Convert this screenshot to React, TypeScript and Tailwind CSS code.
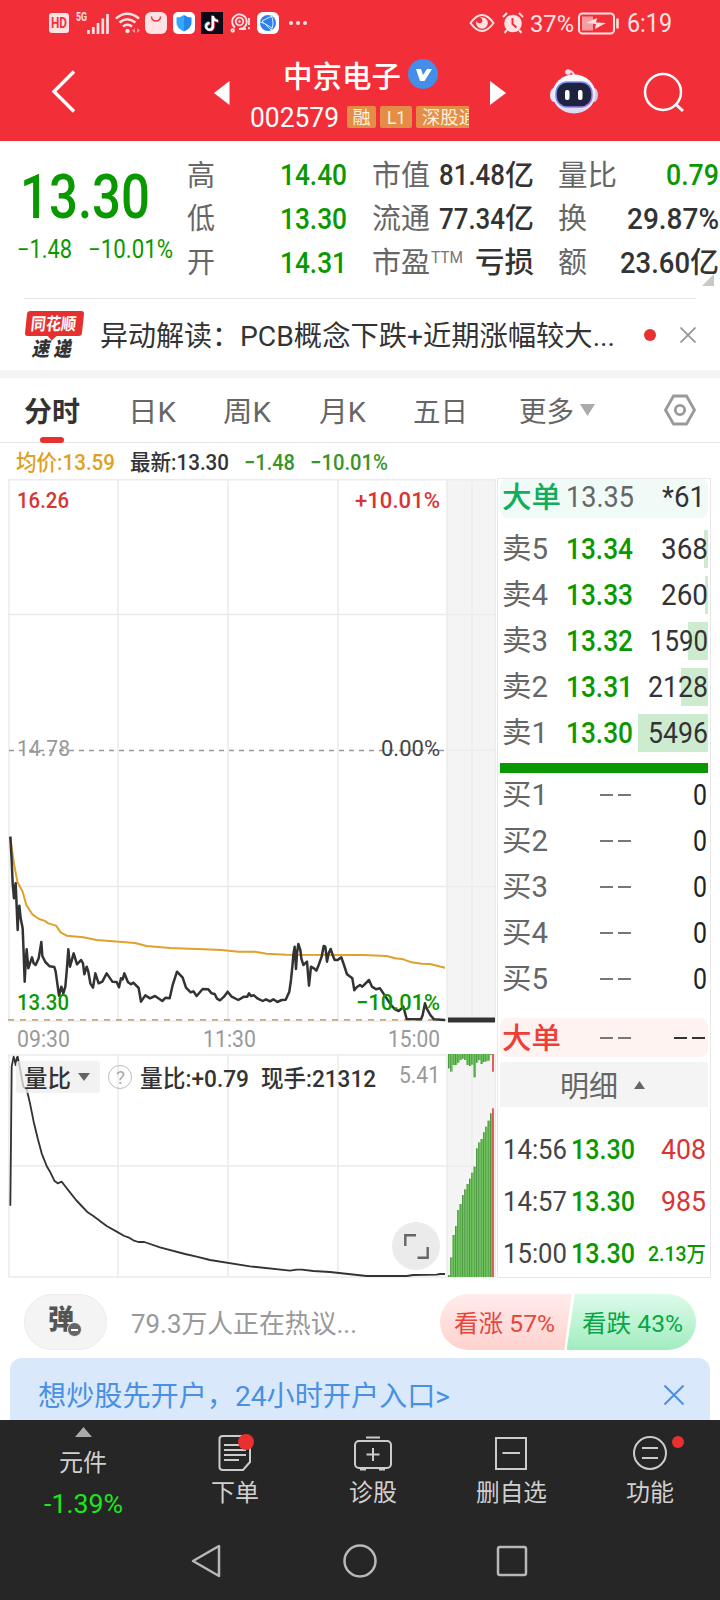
import { useLayoutEffect, useRef, type ReactNode } from "react";
import { clsx } from "clsx";

type FitProps = { w: number; className?: string; children: ReactNode };

// Condenses a run of text horizontally so that it fills exactly `w` pixels.
function Fit({ w, className, children }: FitProps) {
  const ref = useRef<HTMLSpanElement>(null);

  useLayoutEffect(() => {
    const el = ref.current;
    if (el && el.offsetWidth) {
      el.style.transform = "none";
      el.style.transform = `scaleX(${w / el.getBoundingClientRect().width})`;
    }
  }, [w]);

  return (
    <span className="inline-flex shrink-0" style={{ width: w }}>
      <span ref={ref} className={clsx("inline-block origin-left whitespace-nowrap leading-none", className)}>
        {children}
      </span>
    </span>
  );
}

const asks = [
  { label: "卖5", price: "13.34", volume: "368", vw: 47, bar: 4 },
  { label: "卖4", price: "13.33", volume: "260", vw: 47, bar: 3 },
  { label: "卖3", price: "13.32", volume: "1590", vw: 58, bar: 20 },
  { label: "卖2", price: "13.31", volume: "2128", vw: 60, bar: 27 },
  { label: "卖1", price: "13.30", volume: "5496", vw: 60, bar: 70 },
];

const bids = ["买1", "买2", "买3", "买4", "买5"];

const trades = [
  { time: "14:56", price: "13.30", volume: "408", up: true },
  { time: "14:57", price: "13.30", volume: "985", up: true },
  { time: "15:00", price: "13.30", volume: "2.13万", up: false },
];

const auctionTop = [85, 95, 75, 75, 68, 60, 56, 60, 75, 78, 74, 112, 68, 60, 72, 66, 64, 62, 45, 95];
const auctionBottom = [
  705, 652, 585, 558, 510, 492, 465, 448, 432, 416, 398, 380, 325, 307, 297, 277, 260, 242, 220, 205,
];

const pricePoints =
  "31,50 35,120 38,190 42,235 44,210 47,190 50,260 53,330 55,280 58,257 62,295 68,325 71,400 74,485 77,430 80,388 85,445 96,412 101,430 107,435 116,415 124,366 127,408 136,426 149,439 163,441 167,455 177,527 184,500 190,520 196,500 200,455 205,388 210,440 221,400 231,433 243,420 249,430 253,463 260,440 265,455 271,490 279,503 286,460 296,490 307,485 320,460 337,485 350,486 357,502 363,475 368,478 373,460 384,487 393,493 400,488 416,504 423,545 436,526 450,535 465,528 475,535 487,543 497,533 509,535 518,495 531,455 548,473 558,503 572,517 580,514 590,528 608,507 625,508 635,520 644,522 651,536 660,541 672,530 683,515 695,530 715,540 732,530 742,530 747,520 753,528 762,526 772,535 788,543 798,538 810,544 820,538 832,546 845,540 857,539 868,515 873,480 878,430 880,405 884,380 888,447 891,400 895,372 901,390 904,415 910,435 921,425 927,497 933,440 942,445 949,452 956,435 965,410 971,378 976,380 981,425 986,400 992,387 998,405 1004,420 1013,420 1024,412 1032,435 1041,463 1057,475 1063,511 1070,502 1080,495 1087,500 1107,480 1116,500 1128,508 1140,505 1150,520 1160,535 1173,555 1185,568 1196,573 1202,568 1210,560 1220,597 1263,598 1268,585 1275,550 1280,565 1291,585 1302,598 1335,600";
const averagePoints =
  "31,50 36,90 42,130 52,185 68,215 79,255 97,283 117,297 133,302 145,310 168,317 182,337 200,347 250,352 290,360 405,369 440,378 510,384 610,388 665,390 715,395 765,395 800,401 860,404 1090,405 1160,408 1185,415 1210,418 1235,427 1265,431 1290,432 1335,443";
const ratioPoints =
  "31,497 33,300 35,80 41,50 44,60 47,75 51,52 53,50 60,85 70,140 80,148 90,190 101,245 113,295 125,340 140,378 150,395 163,422 173,430 185,425 195,438 210,457 228,480 245,498 263,517 280,528 300,543 320,558 350,575 373,588 385,592 400,601 415,606 433,606 480,622 555,642 590,650 630,660 750,679 870,692 890,689 905,689 940,693 990,696 1100,708 1220,708 1240,705 1310,704 1320,702 1335,702";

function StatusBar() {
  return (
    <div className="flex h-[46px] items-center pl-[49px] text-[#ffe3e4]">
      <div className="flex h-5 w-5 items-center justify-center rounded-[3px] bg-[#ffe3e4] text-[#f22f38]">
        <Fit w={16} className="text-[14px] font-bold">HD</Fit>
      </div>
      <div className="ml-[7px] flex self-start pt-[11px]">
        <Fit w={11} className="text-[12px] font-bold">5G</Fit>
      </div>
      <svg className="h-[21px] w-[22px]" viewBox="0 0 22 21">
        <path d="M1.500 17v4M6.300 14v7M11 10v11M15.800 5.500v15.500M20.500 1v20" stroke="currentColor" strokeWidth="2.700" />
      </svg>
      <svg className="ml-[6px] h-[22px] w-[26px]" viewBox="0 0 26 22" fill="none" stroke="currentColor" strokeWidth="2.600">
        <path d="M1 6.500Q12 -3 24 6.500M4.500 10.500Q12 4 20.500 10.500M8 14.500Q12.500 11 17 14.500" />
        <circle cx="12.500" cy="19" r="2.200" fill="currentColor" stroke="none" />
        <path d="M20 16l-3 2.500 3 2.500zM22 16l3 2.500-3 2.500z" fill="#f79095" stroke="none" />
      </svg>
      <svg className="ml-[4px] h-[22px] w-[22px]" viewBox="0 0 22 22">
        <rect width="22" height="22" rx="6" fill="#ffe3e4" />
        <path d="M6.500 4.500c0 6 9 6 9 0" fill="none" stroke="#f22f38" strokeWidth="1.500" />
      </svg>
      <svg className="ml-[6px] h-[22px] w-[22px]" viewBox="0 0 22 22">
        <rect width="22" height="22" rx="5" fill="#fff" />
        <path d="M11 3q4 2.500 7.500 2.500V11q0 5-7.500 8.500z" fill="#2487ef" />
        <path d="M11 3Q7 5.500 3.500 5.500V11q0 5 7.500 8.500z" fill="#35a9f7" />
      </svg>
      <svg className="ml-[6px] h-[22px] w-[22px]" viewBox="0 0 22 22" fill="none" strokeWidth="2.200">
        <rect width="22" height="22" fill="#0c0a16" />
        <path d="M12 4v10.500a3.400 3.400 0 1 1-3.400-3.400M12 5q1 3.500 5 4" stroke="#3be0e6" transform="translate(-.7 -.6)" />
        <path d="M12 4v10.500a3.400 3.400 0 1 1-3.400-3.400M12 5q1 3.500 5 4" stroke="#f0345a" transform="translate(.7 .6)" />
        <path d="M12 4v10.500a3.400 3.400 0 1 1-3.400-3.400M12 5q1 3.500 5 4" stroke="#fff" />
      </svg>
      <svg className="ml-[7px] h-[22px] w-[21px]" viewBox="0 0 21 22" fill="none" stroke="currentColor" strokeWidth="1.800">
        <path d="M5 15.500A7.300 7.300 0 1 1 9 17h7" />
        <circle cx="9.500" cy="9.500" r="3.800" />
        <circle cx="9.500" cy="9.500" r="1.200" fill="currentColor" stroke="none" />
        <circle cx="2.700" cy="18.500" r="1.300" />
        <path d="M19 6v7M19 15v2.200" />
      </svg>
      <svg className="ml-[6px] h-[22px] w-[22px]" viewBox="0 0 22 22">
        <rect width="22" height="22" rx="6" fill="#fff" />
        <circle cx="11" cy="11" r="8" fill="#2f80ea" />
        <path d="M16 3.500L5 9l9 9M14 3q4 8 0 16M3 10q5 1 12 6" fill="none" stroke="#d8eaff" strokeWidth="1" />
      </svg>
      <div className="ml-[10px] flex gap-[3px]">
        <i className="h-1 w-1 rounded-full bg-[#ffe3e4]" />
        <i className="h-1 w-1 rounded-full bg-[#ffe3e4]" />
        <i className="h-1 w-1 rounded-full bg-[#ffe3e4]" />
      </div>

      <svg className="ml-[162px] h-5 w-[26px]" viewBox="0 0 26 20" fill="none" stroke="currentColor" strokeWidth="2">
        <path d="M1.500 10Q13-6 24.500 10Q13 26 1.500 10z" />
        <circle cx="13" cy="10" r="5.800" fill="currentColor" stroke="none" />
        <circle cx="10.500" cy="7.500" r="2.800" fill="#f22f38" stroke="none" />
      </svg>
      <svg className="ml-[7px] h-[22px] w-[22px]" viewBox="0 0 22 22">
        <circle cx="11" cy="11.500" r="8.800" fill="currentColor" />
        <path d="M1 5l4-4M21 5l-4-4M5 18l-2.500 3M17 18l2.500 3" stroke="currentColor" strokeWidth="2" />
        <path d="M10.500 6v6l4 3.500" fill="none" stroke="#f22f38" strokeWidth="2" />
      </svg>
      <div className="ml-[6px] flex">
        <Fit w={44} className="pt-px text-[24px]">37%</Fit>
      </div>
      <svg className="ml-[4px] h-[23px] w-[42px]" viewBox="0 0 42 23">
        <rect x="1" y="1.500" width="35" height="20" rx="3.500" fill="none" stroke="currentColor" strokeWidth="2" />
        <rect x="4" y="4.500" width="11" height="14" fill="#f79ca0" />
        <path d="M8 11l11-5-1 4.500 10 .5-11 6 1-5z" fill="currentColor" />
        <path d="M39.500 6.500v10" stroke="currentColor" strokeWidth="2.500" />
      </svg>
      <div className="ml-[7px] flex">
        <Fit w={45} className="pt-px text-[25px]">6:19</Fit>
      </div>
    </div>
  );
}

function Header() {
  return (
    <div className="flex h-[95px] items-start pl-[51px] text-white">
      <svg className="mt-6 h-[43px] w-6" viewBox="0 0 24 43">
        <path d="M23 1.500L3 21.500 23 41.500" fill="none" stroke="currentColor" strokeWidth="3.400" />
      </svg>
      <svg className="ml-[139px] mt-[35px] h-6 w-4" viewBox="0 0 16 24">
        <path d="M0 12L15.500 0v24z" fill="currentColor" />
      </svg>
      <div className="ml-[20px] w-[221px]">
        <div className="flex h-[30px] items-center pl-[33px] pt-[28px]">
          <Fit w={118} className="pt-[3px] text-[30px] font-medium">中京电子</Fit>
          <svg className="ml-[7px] -mt-[3px] h-[30px] w-[30px]" viewBox="0 0 30 30">
            <circle cx="15" cy="15" r="15" fill="#448ee9" />
            <path d="M8 10h5l2 6 4-6h5l-7.500 12h-4.500z" fill="#fff" />
          </svg>
        </div>
        <div className="mt-[30px] flex h-[22px] items-center">
          <Fit w={89} className="pt-[2px] text-[28px]">002579</Fit>
          <div className="ml-2 flex h-[22px] gap-1 text-[#fff1dc]">
            <span className="flex w-[29px] shrink-0 items-center justify-center rounded-[2px] bg-[#e48d47]">
              <Fit w={18} className="pt-[2px] text-[18px]">融</Fit>
            </span>
            <span className="flex w-[32px] shrink-0 items-center justify-center rounded-[2px] bg-[#e48d47]">
              <Fit w={19} className="pt-px text-[19px]">L1</Fit>
            </span>
            <span className="flex w-[53px] shrink-0 items-center overflow-hidden rounded-l-[2px] bg-[#e48d47] pl-[6px]">
              <Fit w={55} className="pt-[2px] text-[18px]">深股通</Fit>
            </span>
          </div>
        </div>
      </div>
      <svg className="ml-[19px] mt-[35px] h-6 w-4" viewBox="0 0 16 24">
        <path d="M16 12L0 0v24z" fill="currentColor" />
      </svg>
      <svg className="ml-[44px] mt-[22px] h-[46px] w-[48px]" viewBox="0 0 48 46">
        <defs>
          <linearGradient id="head" x1="0" y1="0" x2="0" y2="1">
            <stop offset="0" stopColor="#ffffff" />
            <stop offset="1" stopColor="#d9dbf5" />
          </linearGradient>
          <linearGradient id="rim" x1="0" y1="0" x2="1" y2="1">
            <stop offset="0" stopColor="#6d9cf5" />
            <stop offset="1" stopColor="#a56cf0" />
          </linearGradient>
        </defs>
        <path d="M18 3.500q5-1 6.500 5" fill="none" stroke="#e8ddf5" strokeWidth="2" />
        <circle cx="18" cy="4" r="2.800" fill="#f3dcea" />
        <ellipse cx="4" cy="27" rx="4" ry="7" fill="#e4e4f8" />
        <ellipse cx="44" cy="27" rx="4" ry="7" fill="#c9c9f2" />
        <ellipse cx="24" cy="26" rx="21.500" ry="19.500" fill="url(#head)" />
        <rect x="6" y="14" width="36" height="25" rx="11" fill="#1e2440" stroke="url(#rim)" strokeWidth="1.500" />
        <rect x="15" y="22" width="4.500" height="10" rx="2" fill="#fff" />
        <rect x="28" y="22" width="4.500" height="10" rx="2" fill="#fff" />
      </svg>
      <svg className="ml-[45px] mt-[26px] h-[42px] w-[42px]" viewBox="0 0 42 42" fill="none" stroke="currentColor" strokeWidth="2.500">
        <circle cx="20" cy="20" r="18" />
        <path d="M32.500 32l7.500 7" strokeWidth="3" />
      </svg>
    </div>
  );
}

const labelCls = "text-[29px] text-[#666] pt-px";
const numCls = "text-[29px] font-medium";
const cjkCls = "text-[29px] font-medium text-[#333] pt-px";

function Quote() {
  return (
    <section className="flex h-[157px] text-[#333]">
      <div className="w-[187px] pl-[17px] pt-[26px] text-[#0a9800]">
        <div className="flex pl-[3px]">
          <Fit w={130} className="text-[61px] font-medium">13.30</Fit>
        </div>
        <div className="mt-[9px] flex">
          <Fit w={55} className="text-[25px]">−1.48</Fit>
          <span className="w-[16px]" />
          <Fit w={85} className="text-[25px]">−10.01%</Fit>
        </div>
      </div>
      <div className="grid h-[144px] w-[160px] grid-rows-3 items-center pt-[13px]">
        {[
          ["高", "14.40"],
          ["低", "13.30"],
          ["开", "14.31"],
        ].map(([label, value]) => (
          <div key={label} className="flex items-center justify-between">
            <Fit w={28} className={labelCls}>{label}</Fit>
            <Fit w={67} className="text-[29px] font-medium text-[#0a9800]">{value}</Fit>
          </div>
        ))}
      </div>
      <div className="ml-[25px] grid h-[144px] w-[162px] grid-rows-3 items-center pt-[13px]">
        <div className="flex items-center justify-between">
          <Fit w={58} className={labelCls}>市值</Fit>
          <span className="flex items-center">
            <Fit w={66} className={numCls}>81.48</Fit>
            <Fit w={29} className={cjkCls}>亿</Fit>
          </span>
        </div>
        <div className="flex items-center justify-between">
          <Fit w={58} className={labelCls}>流通</Fit>
          <span className="flex items-center">
            <Fit w={66} className={numCls}>77.34</Fit>
            <Fit w={29} className={cjkCls}>亿</Fit>
          </span>
        </div>
        <div className="flex items-center">
          <Fit w={58} className={labelCls}>市盈</Fit>
          <span className="-mt-[10px] ml-px flex">
            <Fit w={32} className="text-[16px] text-[#777]">TTM</Fit>
          </span>
          <span className="ml-auto flex">
            <Fit w={59} className={cjkCls}>亏损</Fit>
          </span>
        </div>
      </div>
      <div className="relative ml-[24px] grid h-[144px] w-[161px] grid-rows-3 items-center pt-[13px]">
        <div className="flex items-center justify-between">
          <Fit w={59} className={labelCls}>量比</Fit>
          <Fit w={53} className="text-[29px] font-medium text-[#0a9800]">0.79</Fit>
        </div>
        <div className="flex items-center justify-between">
          <Fit w={29} className={labelCls}>换</Fit>
          <Fit w={92} className={numCls}>29.87%</Fit>
        </div>
        <div className="flex items-center justify-between">
          <Fit w={29} className={labelCls}>额</Fit>
          <span className="flex items-center">
            <Fit w={70} className={numCls}>23.60</Fit>
            <Fit w={29} className={cjkCls}>亿</Fit>
          </span>
        </div>
        <svg className="absolute right-[5px] top-[133px] h-3 w-3" viewBox="0 0 12 12">
          <path d="M12 0v12H0z" fill="#c8c8c8" />
        </svg>
      </div>
    </section>
  );
}

function News() {
  return (
    <section className="flex h-[72px] items-center pl-[24px]">
      <div className="flex w-[60px] flex-col items-center">
        <div className="relative flex h-[25px] w-[57px] -skew-x-6 items-center justify-center rounded-[3px] bg-[#e5302f] text-white">
          <Fit w={47} className="pt-px text-[17px] font-bold">同花顺</Fit>
          <i className="absolute -bottom-[3px] left-[24px] h-[7px] w-[7px] rotate-45 bg-[#e5302f]" />
        </div>
        <div className="mt-[3px] flex -skew-x-12 text-[#333]">
          <Fit w={43} className="text-[20px] font-black">速 递</Fit>
        </div>
      </div>
      <div className="ml-[16px] flex">
        <Fit w={140} className="pt-[3px] text-[28px] text-[#333]">异动解读：</Fit>
        <Fit w={375} className="pt-[3px] text-[28px] text-[#333]">PCB概念下跌+近期涨幅较大...</Fit>
      </div>
      <i className="ml-[29px] h-3 w-3 rounded-full bg-[#e93030]" />
      <svg className="ml-[24px] h-4 w-4" viewBox="0 0 16 16">
        <path d="M.5.500l15 15M15.500.500l-15 15" stroke="#999" strokeWidth="1.800" />
      </svg>
    </section>
  );
}

function Tabs() {
  return (
    <nav className="flex h-[65px] items-center border-b border-[#e6e6e6] pl-[24px] text-[28px] text-[#666]">
      <span className="relative flex">
        <Fit w={56} className="pt-[5px] font-bold text-[#333]">分时</Fit>
        <i className="absolute left-4 top-[43px] h-[6px] w-6 rounded-full bg-[#e93030]" />
      </span>
      <span className="ml-[48px] flex"><Fit w={48} className="pt-[5px]">日K</Fit></span>
      <span className="ml-[47px] flex"><Fit w={48} className="pt-[5px]">周K</Fit></span>
      <span className="ml-[48px] flex"><Fit w={47} className="pt-[5px]">月K</Fit></span>
      <span className="ml-[47px] flex"><Fit w={55} className="pt-[5px]">五日</Fit></span>
      <span className="ml-[51px] flex"><Fit w={55} className="pt-[5px]">更多</Fit></span>
      <svg className="ml-[6px] h-3 w-[15px]" viewBox="0 0 15 12">
        <path d="M0 0h15L7.500 12z" fill="#aaa" />
      </svg>
      <svg className="ml-[69px] h-8 w-8" viewBox="0 0 32 32" fill="none" stroke="#999" strokeWidth="2.800" strokeLinejoin="round">
        <path d="M9.500 2h13L30.500 16l-8 14h-13L1.500 16z" />
        <circle cx="16" cy="16" r="4.700" />
      </svg>
    </nav>
  );
}

function Charts() {
  return (
    <div className="relative h-[799px] w-[488px]">
      <svg className="block h-[799px] w-[488px]" viewBox="8 479 488 799" fill="none">
        <path d="M446 480H496V1021H446zM446 1055H496V1277H446z" fill="#f4f4f4" />
        <g stroke="#ebebeb" strokeWidth="1.500">
          <path d="M8 479.700H496M8 614.500H496M446 750H496M8 886.500H496M8 1021H496M8 1055H496M8 1166H496M8 1277H496" />
          <path d="M9 479V1021M118 479V1021M228 479V1021M338 479V1021M447 479V1021M472 479V1021M495.500 479V1021" />
          <path d="M9 1055V1277M118 1055V1277M228 1055V1277M338 1055V1277M447 1055V1277M472 1055V1277M495.500 1055V1277" />
        </g>
        <path d="M9 750.500H446" stroke="#999" strokeWidth="1.600" strokeDasharray="5 5" />
        <path d="M8 1019.800H446" stroke="#c3a97e" strokeWidth="1.800" strokeDasharray="6 6" />
        <g transform="translate(0 820) scale(.33333)" strokeLinejoin="round">
          <polyline points={averagePoints} stroke="#e0a02c" strokeWidth="6" />
          <polyline points={pricePoints} stroke="#333" strokeWidth="7.500" />
        </g>
        <path d="M448 1020H495" stroke="#333" strokeWidth="5" />
        <g transform="translate(0 1040) scale(.33333)">
          {auctionTop.map((y, i) => (
            <g key={i}>
              <rect x={1344 + i * 7} y={42} width={i === 19 ? 5 : 7} height={y - 42} fill={i === 19 ? "#ea6a64" : "#6fc45f"} />
              <rect x={1344 + i * 7} y={42} width={2.5} height={y - 42} fill={i === 19 ? "#d9403c" : "#46923a"} />
              <rect x={1344 + i * 7} y={auctionBottom[i]} width={i === 19 ? 5 : 7} height={711 - auctionBottom[i]} fill={i === 19 ? "#ea6a64" : "#6fc45f"} />
              <rect x={1344 + i * 7} y={auctionBottom[i]} width={2.5} height={711 - auctionBottom[i]} fill={i === 19 ? "#d9403c" : "#46923a"} />
            </g>
          ))}
          <polyline points={ratioPoints} stroke="#333" strokeWidth="5.500" strokeLinejoin="round" />
        </g>
      </svg>

      <div className="absolute inset-x-0 top-0 flex h-[799px] flex-col pl-[9px] pr-[56px] text-[22px]">
        <div className="flex justify-between pt-[11px]">
          <Fit w={52} className="font-medium text-[#d93434]">16.26</Fit>
          <Fit w={85} className="font-medium text-[#d93434]">+10.01%</Fit>
        </div>
        <div className="mt-[226px] flex justify-between">
          <Fit w={53} className="text-[#999]">14.78</Fit>
          <Fit w={59} className="text-[#444]">0.00%</Fit>
        </div>
        <div className="mt-[232px] flex justify-between">
          <Fit w={52} className="font-medium text-[#0a9800]">13.30</Fit>
          <Fit w={84} className="font-medium text-[#0a9800]">−10.01%</Fit>
        </div>
        <div className="mt-[14px] flex text-[23px] text-[#999]">
          <Fit w={53}>09:30</Fit>
          <span className="w-[133px]" />
          <Fit w={53}>11:30</Fit>
          <span className="w-[132px]" />
          <Fit w={52}>15:00</Fit>
        </div>
        <div className="-ml-px mt-[10px] flex h-[32px] items-center">
          <span className="flex h-[32px] w-[84px] items-center rounded-[3px] bg-[#eeeeee]/75 pl-[8px]">
            <Fit w={47} className="pt-[4px] text-[24px] font-medium text-[#333]">量比</Fit>
            <svg className="ml-[7px] h-2 w-3" viewBox="0 0 12 8">
              <path d="M0 0h12L6 8z" fill="#666" />
            </svg>
          </span>
          <span className="ml-[8px] flex h-6 w-6 items-center justify-center rounded-full border-[1.5px] border-[#bbb]">
            <Fit w={9} className="pt-px text-[18px] text-[#aaa]">?</Fit>
          </span>
          <span className="ml-[8px] flex">
            <Fit w={109} className="pt-[4px] text-[24px] font-medium text-[#333]">量比:+0.79</Fit>
          </span>
          <span className="ml-[12px] flex">
            <Fit w={115} className="pt-[4px] text-[24px] font-medium text-[#333]">现手:21312</Fit>
          </span>
          <span className="-mt-[4px] ml-auto flex">
            <Fit w={41} className="text-[24px] text-[#999]">5.41</Fit>
          </span>
        </div>
      </div>

      <button className="absolute bottom-[8px] left-[384px] flex h-[48px] w-[48px] items-center justify-center rounded-full bg-[#ebebeb]">
        <svg className="h-[25px] w-[25px]" viewBox="0 0 25 25" fill="none" stroke="#666" strokeWidth="2.400">
          <path d="M1.300 12V1.300H12M13.500 23.700H23.700V13" />
        </svg>
      </button>
    </div>
  );
}

function OrderBook() {
  return (
    <div className="-mt-px ml-[1px] flex h-[800px] w-[214px] flex-col border border-[#e8e8e8] px-[2px] text-[29px]">
      <div className="flex h-[39px] shrink-0 items-center rounded-[8px] bg-[#f0faf6] pl-[2px] pr-[3px]">
        <Fit w={59} className="font-medium text-[#10ad5c]">大单</Fit>
        <span className="ml-[5px] flex pb-[2px]"><Fit w={68} className="text-[#666]">13.35</Fit></span>
        <span className="ml-auto flex pb-[2px]"><Fit w={43} className="text-[#333]">*61</Fit></span>
      </div>
      <div className="mt-[8px]">
        {asks.map((row) => (
          <div key={row.label} className="relative flex h-[46px] items-center pl-[2px]">
            <i className="absolute right-0 top-[4px] h-[38px] bg-[#cdebcf]" style={{ width: row.bar }} />
            <Fit w={46} className="pt-px text-[#666]">{row.label}</Fit>
            <span className="ml-[18px] flex"><Fit w={67} className="font-medium text-[#0a9800]">{row.price}</Fit></span>
            <span className="relative ml-auto flex"><Fit w={row.vw} className="text-[#333]">{row.volume}</Fit></span>
          </div>
        ))}
      </div>
      <div className="mt-[7px] h-[10px] shrink-0 bg-[#0a9800]" />
      <div className="-mt-[2px]">
        {bids.map((label) => (
          <div key={label} className="flex h-[46px] items-center pl-[2px] pr-px pt-[2px]">
            <Fit w={46} className="text-[#666]">{label}</Fit>
            <i className="ml-[52px] h-[2px] w-[13px] bg-[#777]" />
            <i className="ml-[5px] h-[2px] w-[13px] bg-[#777]" />
            <span className="ml-auto flex"><Fit w={14} className="text-[#222]">0</Fit></span>
          </div>
        ))}
      </div>
      <div className="mt-[17px] flex h-[39px] shrink-0 items-center rounded-[8px] bg-[#fff3f2] pl-[2px] pr-[3px]">
        <Fit w={59} className="pt-[3px] font-medium text-[#ee3f36]">大单</Fit>
        <i className="ml-[39px] h-[2px] w-[13px] bg-[#777]" />
        <i className="ml-[5px] h-[2px] w-[13px] bg-[#777]" />
        <i className="ml-auto h-[2px] w-[13px] bg-[#333]" />
        <i className="ml-[5px] h-[2px] w-[13px] bg-[#333]" />
      </div>
      <div className="mt-[5px] flex h-[45px] shrink-0 items-center bg-[#f4f4f4] pl-[60px]">
        <Fit w={58} className="pt-[5px] text-[#666]">明细</Fit>
        <svg className="ml-[16px] h-2 w-[11px]" viewBox="0 0 11 8">
          <path d="M0 8h11L5.500 0z" fill="#666" />
        </svg>
      </div>
      <div className="mt-[16px]">
        {trades.map((row) => (
          <div key={row.time} className="flex h-[52px] items-center pl-[3px] pr-[2px] pt-[2px] text-[27px]">
            <Fit w={64} className="text-[#444]">{row.time}</Fit>
            <span className="ml-[4px] flex"><Fit w={64} className="font-medium text-[#0a9800]">{row.price}</Fit></span>
            <span className="ml-auto flex">
              {row.up ? (
                <Fit w={45} className="text-[#d93434]">{row.volume}</Fit>
              ) : (
                <Fit w={58} className="pt-px text-[21px] font-medium text-[#0a9800]">{row.volume}</Fit>
              )}
            </span>
          </div>
        ))}
      </div>
    </div>
  );
}

function Sentiment() {
  return (
    <section className="mt-4 flex h-[56px] items-center pl-[24px]">
      <div className="relative flex h-[56px] w-[83px] items-center rounded-full border border-[#ececec] bg-[#f4f4f4] pb-[4px] pl-[23px]">
        <Fit w={26} className="text-[27px] font-black text-[#555]">弹</Fit>
        <i className="absolute left-[42px] top-[27px] flex h-[15px] w-[15px] items-center justify-center rounded-full border border-[#f4f4f4] bg-[#666]">
          <i className="h-[2px] w-[7px] bg-white" />
        </i>
      </div>
      <div className="ml-[24px] flex w-[309px]">
        <Fit w={226} className="pt-[4px] text-[26px] text-[#999]">79.3万人正在热议...</Fit>
      </div>
      <div className="flex h-[56px] w-[256px] overflow-hidden rounded-full text-[24px]">
        <div className="flex w-[132px] items-center bg-linear-to-b from-[#ffeceb] to-[#ffd2ce] pl-[14px] text-[#e8453c] [clip-path:polygon(0_0,100%_0,94.500%_100%,0_100%)]">
          <Fit w={101} className="pt-[3px]">看涨 57%</Fit>
        </div>
        <div className="-ml-[5px] flex w-[130px] items-center bg-linear-to-b from-[#ddfbe9] to-[#a0ecbf] pl-[15px] text-[#0aa548] [clip-path:polygon(6.500%_0,100%_0,100%_100%,0_100%)]">
          <Fit w={101} className="pt-[3px]">看跌 43%</Fit>
        </div>
      </div>
    </section>
  );
}

function Banner() {
  return (
    <div className="mx-[10px] mt-2 flex h-[62px] items-center rounded-t-[12px] bg-[#d9e8fb] pl-[28px] pt-[12px] text-[#4a90e2]">
      <Fit w={412} className="pt-[4px] text-[28px]">想炒股先开户，24小时开户入口&gt;</Fit>
      <svg className="ml-[214px] h-5 w-5" viewBox="0 0 20 20">
        <path d="M.5.500l19 19M19.500.500l-19 19" stroke="currentColor" strokeWidth="2" />
      </svg>
    </div>
  );
}

const navText = "text-[24px] text-[#d0d0d0]";

function BottomBar() {
  return (
    <footer className="h-[180px] bg-[#262626] text-[#ccc]">
      <div className="flex h-[110px] items-start">
        <div className="flex w-[166px] flex-col items-center pt-[7px]">
          <svg className="h-[10px] w-[17px]" viewBox="0 0 17 10">
            <path d="M0 10h17L8.500 0z" fill="#aaa" />
          </svg>
          <span className="mt-[14px] flex"><Fit w={48} className={navText}>元件</Fit></span>
          <span className="mt-[17px] flex"><Fit w={79} className="text-[25px] text-[#1be81b]">-1.39%</Fit></span>
        </div>
        <div className="relative flex w-[138px] flex-col items-center pt-[15px]">
          <svg className="h-[36px] w-[34px]" viewBox="0 0 34 36" fill="none" stroke="currentColor" strokeWidth="2">
            <path d="M5 1H29q3 0 3 3V27l-7 8H5q-3.500 0-3.500-3V4q0-3 3.500-3z" />
            <path d="M6 10H23M6 15H28M6 20H28M6 25H21" />
          </svg>
          <i className="absolute left-[72px] top-[14px] h-4 w-4 rounded-full bg-[#e93030]" />
          <span className="mt-[10px] flex"><Fit w={48} className={navText}>下单</Fit></span>
        </div>
        <div className="flex w-[138px] flex-col items-center pt-[15px]">
          <svg className="h-[36px] w-[38px]" viewBox="0 0 38 36" fill="none" stroke="currentColor" strokeWidth="2">
            <rect x="1" y="6" width="36" height="27" rx="4" />
            <path d="M12 2.500H26M19 13V26M12.500 19.500H25.500M6 34.500H12M25 34.500H31" />
          </svg>
          <span className="mt-[10px] flex"><Fit w={48} className={navText}>诊股</Fit></span>
        </div>
        <div className="flex w-[138px] flex-col items-center pt-[15px]">
          <svg className="h-[36px] w-[34px]" viewBox="0 0 34 36" fill="none" stroke="currentColor" strokeWidth="2">
            <path d="M2 3H32V34H2zM8.500 18H26" />
          </svg>
          <span className="mt-[10px] flex"><Fit w={71} className={navText}>删自选</Fit></span>
        </div>
        <div className="relative flex w-[140px] flex-col items-center pt-[15px]">
          <svg className="h-[36px] w-[34px]" viewBox="0 0 34 36" fill="none" stroke="currentColor" strokeWidth="2">
            <circle cx="17" cy="18" r="16" />
            <path d="M9 13H25M9 23H25" />
          </svg>
          <i className="absolute left-[92px] top-[16px] h-3 w-3 rounded-full bg-[#e93030]" />
          <span className="mt-[10px] flex"><Fit w={48} className={navText}>功能</Fit></span>
        </div>
      </div>
      <div className="flex h-[62px] items-center pl-[191px] text-[#b8b8b8]">
        <svg className="h-[34px] w-[30px]" viewBox="0 0 30 34" fill="none" stroke="currentColor" strokeWidth="2.500" strokeLinejoin="round">
          <path d="M28 2V32L2 17z" />
        </svg>
        <svg className="ml-[122px] h-[34px] w-[34px]" viewBox="0 0 34 34" fill="none" stroke="currentColor" strokeWidth="2.500">
          <circle cx="17" cy="17" r="15.500" />
        </svg>
        <svg className="ml-[119px] h-[32px] w-[32px]" viewBox="0 0 32 32" fill="none" stroke="currentColor" strokeWidth="2.500">
          <rect x="2" y="2" width="28" height="28" rx="2" />
        </svg>
      </div>
    </footer>
  );
}

export default function App() {
  return (
    <div className="h-[1600px] w-[720px] overflow-hidden bg-white font-[Roboto,'Noto_Sans_CJK_SC',sans-serif]">
      <header className="h-[141px] bg-[#f22f38]">
        <StatusBar />
        <Header />
      </header>
      <Quote />
      <div className="mx-[24px] h-px bg-[#e8e8e8]" />
      <News />
      <div className="-mt-px h-[8px] bg-[#f4f4f4]" />
      <Tabs />
      <div className="flex h-[36px] items-center pl-[16px] pt-[4px] text-[22px]">
        <Fit w={99} className="font-medium text-[#e0a020]">均价:13.59</Fit>
        <span className="ml-[15px] flex"><Fit w={99} className="font-medium text-[#333]">最新:13.30</Fit></span>
        <span className="ml-[15px] flex"><Fit w={51} className="font-medium text-[#3a9526]">−1.48</Fit></span>
        <span className="ml-[15px] flex"><Fit w={78} className="font-medium text-[#3a9526]">−10.01%</Fit></span>
      </div>
      <div className="flex pl-[8px]">
        <Charts />
        <OrderBook />
      </div>
      <Sentiment />
      <Banner />
      <BottomBar />
    </div>
  );
}
